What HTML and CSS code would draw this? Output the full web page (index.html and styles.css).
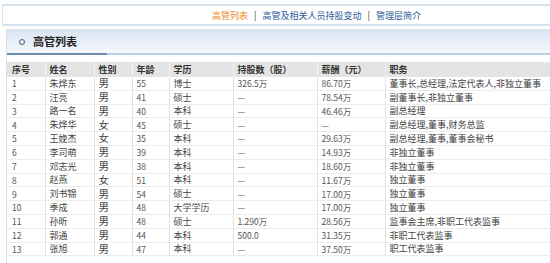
FILE: index.html
```html
<!DOCTYPE html>
<html lang="zh-CN">
<head>
<meta charset="utf-8">
<title>高管列表</title>
<link rel="stylesheet" href="styles.css">
</head>
<body>
<div class="nav">
  <a class="nav-link active">高管列表</a>
  <span class="sep">|</span>
  <a class="nav-link">高管及相关人员持股变动</a>
  <span class="sep">|</span>
  <a class="nav-link">管理层简介</a>
</div>
<div class="panel">
  <div class="title"><span class="dot"></span><h2>高管列表</h2></div>
  <table class="grid">
    <colgroup>
      <col class="c1"><col class="c2"><col class="c3"><col class="c4"><col class="c5"><col class="c6"><col class="c7"><col class="c8">
    </colgroup>
    <thead>
      <tr><th>序号</th><th>姓名</th><th>性别</th><th>年龄</th><th>学历</th><th>持股数（股）</th><th>薪酬（元）</th><th>职务</th></tr>
    </thead>
    <tbody>
      <tr><td class="n">1</td><td>朱烨东</td><td class="sx">男</td><td class="n">55</td><td>博士</td><td class="n">326.5万</td><td class="n">86.70万</td><td>董事长,总经理,法定代表人,非独立董事</td></tr>
      <tr><td class="n">2</td><td>汪亮</td><td class="sx">男</td><td class="n">41</td><td>硕士</td><td class="n">—</td><td class="n">78.54万</td><td>副董事长,非独立董事</td></tr>
      <tr><td class="n">3</td><td>路一名</td><td class="sx">男</td><td class="n">40</td><td>本科</td><td class="n">—</td><td class="n">46.46万</td><td>副总经理</td></tr>
      <tr><td class="n">4</td><td>朱烨华</td><td class="sx">女</td><td class="n">45</td><td>硕士</td><td class="n">—</td><td class="n">—</td><td>副总经理,董事,财务总监</td></tr>
      <tr><td class="n">5</td><td>王娩杰</td><td class="sx">女</td><td class="n">35</td><td>本科</td><td class="n">—</td><td class="n">29.63万</td><td>副总经理,董事,董事会秘书</td></tr>
      <tr><td class="n">6</td><td>李司萌</td><td class="sx">男</td><td class="n">39</td><td>本科</td><td class="n">—</td><td class="n">14.93万</td><td>非独立董事</td></tr>
      <tr><td class="n">7</td><td>邓志光</td><td class="sx">男</td><td class="n">38</td><td>本科</td><td class="n">—</td><td class="n">18.60万</td><td>非独立董事</td></tr>
      <tr><td class="n">8</td><td>赵燕</td><td class="sx">女</td><td class="n">51</td><td>本科</td><td class="n">—</td><td class="n">11.67万</td><td>独立董事</td></tr>
      <tr><td class="n">9</td><td>刘书锦</td><td class="sx">男</td><td class="n">54</td><td>硕士</td><td class="n">—</td><td class="n">17.00万</td><td>独立董事</td></tr>
      <tr><td class="n">10</td><td>季成</td><td class="sx">男</td><td class="n">48</td><td>大学学历</td><td class="n">—</td><td class="n">17.00万</td><td>独立董事</td></tr>
      <tr><td class="n">11</td><td>孙昕</td><td class="sx">男</td><td class="n">48</td><td>硕士</td><td class="n">1.290万</td><td class="n">28.56万</td><td>监事会主席,非职工代表监事</td></tr>
      <tr><td class="n">12</td><td>郭通</td><td class="sx">男</td><td class="n">44</td><td>本科</td><td class="n">500.0</td><td class="n">31.35万</td><td>非职工代表监事</td></tr>
      <tr><td class="n">13</td><td>张旭</td><td class="sx">男</td><td class="n">47</td><td>本科</td><td class="n">—</td><td class="n">37.50万</td><td>职工代表监事</td></tr>
    </tbody>
  </table>
</div>
</body>
</html>
```
FILE: styles.css
```css
html, body {
  margin: 0;
  padding: 0;
  background: #fff;
  overflow: hidden;
}
body {
  font-family: "Noto Sans CJK SC", "Noto Sans", sans-serif;
  color: #333;
  width: 550px;
}
.nav {
  margin: 4px 0 0 2px;
  height: 18px;
  border-top: 2px solid #d4e2ee;
  border-left: 1px solid #d4e2ee;
  border-bottom: 2px solid #d4e2ee;
  display: flex;
  align-items: center;
  justify-content: flex-end;
  padding-right: 129px;
  font-size: 9px;
  line-height: 1;
}
.nav-link {
  color: #2b5a9c;
  text-decoration: none;
}
.nav-link.active {
  color: #f0891e;
}
.sep {
  color: #333;
  margin: 0 6px;
}
.panel {
  margin: 3px 0 0 6px;
  border-left: 1px solid #d4e0ea;
  width: 560px;
  padding-bottom: 20px;
}
.title {
  height: 24px;
  padding-bottom: 2px;
  display: flex;
  align-items: center;
  padding-left: 12px;
  background:
    linear-gradient(to right, #6c8faf 100px, #b9cfe1 100px) left bottom / 100% 2px no-repeat,
    linear-gradient(to bottom, #d9e4f1, #f5f8fc) left top / 100% 24px no-repeat;
}
.dot {
  width: 4px;
  height: 4px;
  border: 1.5px solid #3f617f;
  border-radius: 50%;
  margin-right: 8px;
  margin-top: 2px;
}
.title h2 {
  margin: 0;
  font-size: 11px;
  font-weight: bold;
  color: #222;
  line-height: 1;
}
.grid {
  margin-top: 7px;
  border-collapse: collapse;
  table-layout: fixed;
  width: 560px;
  font-size: 9px;
  line-height: 1;
}
.c1 { width: 38px; }
.c2 { width: 49px; }
.c3 { width: 38px; }
.c4 { width: 37px; }
.c5 { width: 64px; }
.c6 { width: 84px; }
.c7 { width: 68px; }
.c8 { width: auto; }
.grid th {
  height: 15px;
  padding: 0 0 0 4px;
  background: #e4e4e4;
  text-align: left;
  font-weight: bold;
  color: #333;
  border-right: 1px solid #f3f3f3;
  white-space: nowrap;
}
.grid td {
  height: 12.8px;
  padding: 0 0 0 4px;
  border-right: 1px solid #e2e2e2;
  border-bottom: 1px solid #ececec;
  white-space: nowrap;
  color: #444;
}
.grid th:first-child, .grid td:first-child {
  padding-left: 5px;
}
.grid td.n {
  color: #555;
  font-size: 8.5px;
}
.grid td.sx {
  font-size: 10.5px;
}
```
